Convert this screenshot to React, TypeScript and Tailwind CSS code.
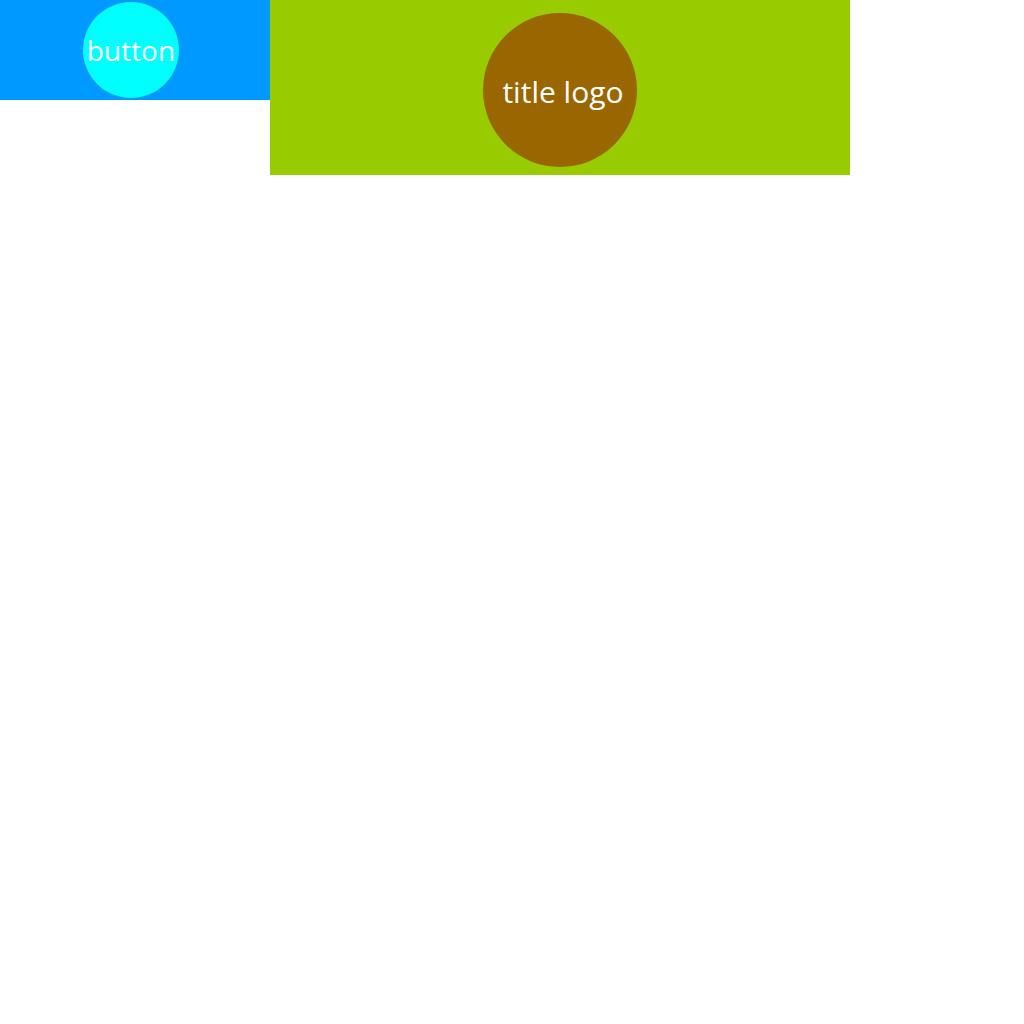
export default function App() {
  return (
    <div className="flex items-start" style={{ fontFamily: '"Open Sans", sans-serif' }}>
      <div className="w-[270px] h-[100px] bg-[#0099ff] flex items-center justify-center">
        <div className="w-[96px] h-[96px] rounded-full bg-[#00ffff] flex items-center justify-center text-white text-[28px] leading-none ml-[-8px]">
          button
        </div>
      </div>
      <div className="w-[580px] h-[175px] bg-[#99cc00] flex items-start justify-center pt-[13px]">
        <div className="w-[154px] h-[154px] rounded-full bg-[#996600] flex items-center justify-center text-white text-[30px] leading-none pl-[6px] pt-[3px]">
          title logo
        </div>
      </div>
    </div>
  );
}
